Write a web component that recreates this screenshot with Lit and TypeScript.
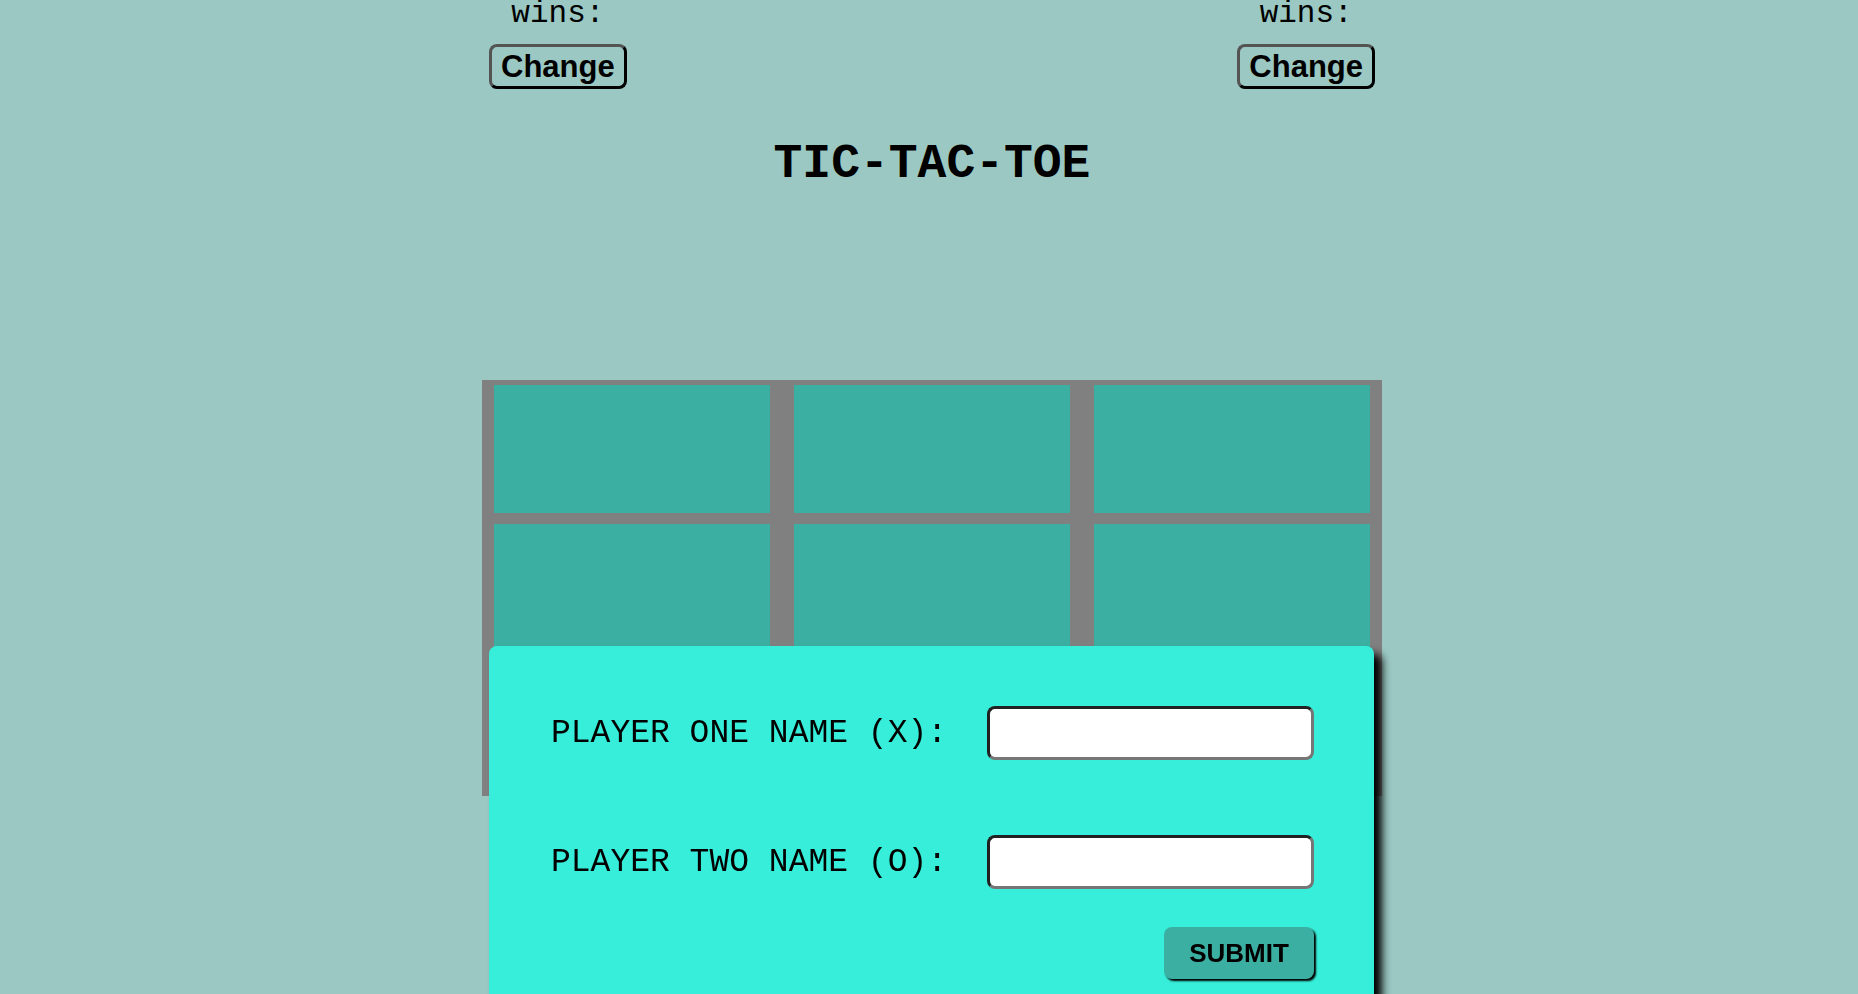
import { LitElement, html, css } from "lit";
import { customElement, property, state } from "lit/decorators.js";

@customElement("player-panel")
class PlayerPanel extends LitElement {
  @property() player = "";

  static styles = css`
    :host {
      display: flex;
      flex-direction: column;
      align-items: center;
      gap: 16px;
    }
    .wins {
      margin: 0;
      font-family: "Liberation Mono", "Courier New", monospace;
      font-size: 31px;
      line-height: 28px;
    }
    .change {
      box-sizing: border-box;
      height: 45px;
      padding: 0 9px;
      border: 3px outset #000;
      border-radius: 8px;
      background: transparent;
      color: #000;
      font: bold 31px "Liberation Sans", Arial, sans-serif;
    }
  `;

  render() {
    return html`
      <p class="wins">wins:</p>
      <button class="change" type="button" aria-label="Change ${this.player}">Change</button>
    `;
  }
}

@customElement("name-form")
class NameForm extends LitElement {
  static styles = css`
    :host {
      display: block;
      box-sizing: border-box;
      width: 885px;
      max-width: 100%;
    }
    .form {
      display: flex;
      flex-direction: column;
      padding: 60px;
      border-radius: 8px;
      background: #36eed9;
      box-shadow: 8px 8px 8px #000;
    }
    .row {
      display: flex;
      align-items: center;
      justify-content: space-between;
      margin-bottom: 75px;
      padding-left: 2px;
      font-family: "Liberation Mono", "Courier New", monospace;
      font-size: 33px;
    }
    .row:last-of-type {
      margin-bottom: 38px;
    }
    .name {
      box-sizing: border-box;
      width: 327px;
      height: 54px;
      padding: 4px 8px;
      border: 3px inset #767676;
      border-radius: 8px;
      background: #fff;
      font: inherit;
    }
    .submit {
      align-self: flex-end;
      height: 52px;
      width: 150px;
      padding: 0;
      border: 0;
      border-radius: 8px;
      background: #3cafa3;
      color: #000;
      box-shadow: 2px 2px 2px #000;
      font: bold 26px "Liberation Sans", Arial, sans-serif;
    }
  `;

  render() {
    return html`
      <form class="form" @submit=${(e: Event) => e.preventDefault()}>
        <div class="row">
          <label for="one">PLAYER ONE NAME (X):</label>
          <input class="name" id="one" type="text" autocomplete="off" />
        </div>
        <div class="row">
          <label for="two">PLAYER TWO NAME (O):</label>
          <input class="name" id="two" type="text" autocomplete="off" />
        </div>
        <button class="submit" type="submit">SUBMIT</button>
      </form>
    `;
  }
}

@customElement("app-root")
class AppRoot extends LitElement {
  @state() cells: string[] = Array(9).fill("");

  static styles = css`
    :host {
      display: block;
      box-sizing: border-box;
      min-height: 100vh;
      padding-left: 6px;
      background: #9bc8c2;
      color: #000;
    }
    .page {
      display: flex;
      flex-direction: column;
      align-items: center;
    }
    .players {
      display: flex;
      justify-content: space-between;
      width: 886px;
      max-width: 100%;
    }
    .title {
      margin: 48px 0 189px;
      font: bold 48px/54px "Liberation Mono", "Courier New", monospace;
    }
    .board {
      display: grid;
      grid-template-columns: repeat(3, 1fr);
      grid-template-rows: repeat(3, 1fr);
      width: 900px;
      max-width: 100%;
      height: 416px;
      background: #808080;
    }
    .cell {
      margin: 5px 12px 6px;
      padding: 0;
      border: 0;
      border-radius: 0;
      background: #3cafa3;
      font: bold 64px "Liberation Mono", "Courier New", monospace;
    }
    .overlay {
      position: fixed;
      inset: 65vh 0 auto;
      display: flex;
      justify-content: center;
      padding-left: 5px;
    }
  `;

  render() {
    return html`
      <main class="page">
        <div class="players">
          <player-panel player="player one"></player-panel>
          <player-panel player="player two"></player-panel>
        </div>
        <h1 class="title">TIC-TAC-TOE</h1>
        <div class="board">
          ${this.cells.map(
            (mark, i) => html`<button class="cell" type="button" aria-label="Square ${i + 1}">${mark}</button>`
          )}
        </div>
      </main>
      <div class="overlay"><name-form></name-form></div>
    `;
  }
}
